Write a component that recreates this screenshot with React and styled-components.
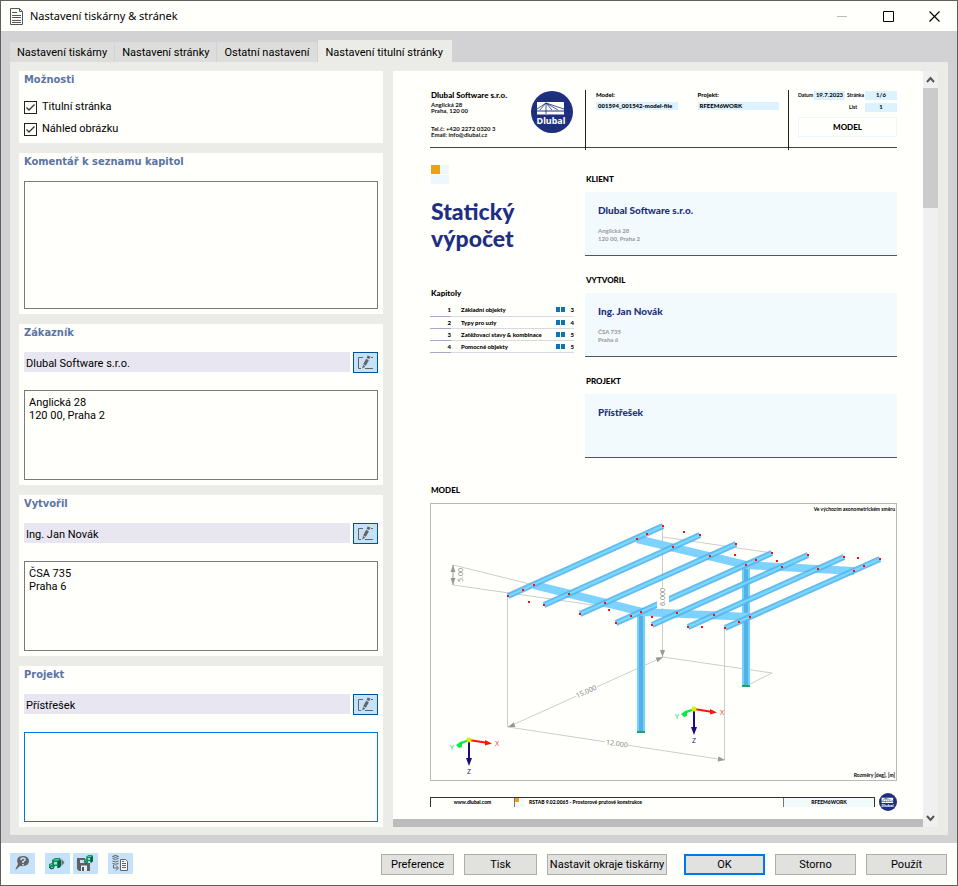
import React from "react";
import styled, { createGlobalStyle } from "styled-components";

const white = "#fffffc";
const ui = 'Roboto, "Noto Sans", sans-serif';
const print = 'Lato, "Open Sans", sans-serif';

const GlobalStyle = createGlobalStyle`
  *, *::before, *::after { box-sizing: border-box; }
  body { margin: 0; background: ${white}; }
  h1, h2, h3, p { margin: 0; }
  button, input, textarea { font: inherit; color: inherit; }
`;

const Window = styled.div`
  display: flex;
  flex-direction: column;
  min-height: 100vh;
  border: 1px solid #5f5f5f;
  background: ${white};
  color: #000;
  font: 11px/16px ${ui};
`;

const TitleBar = styled.header`
  display: flex;
  align-items: center;
  height: 30px;
  padding-left: 9px;
`;

const Title = styled.h1`
  flex: 1;
  margin-left: 7px;
  font-family: "Noto Sans", sans-serif;
  font-size: 11px;
  font-weight: 400;
`;

const Caption = styled.button`
  display: grid;
  place-items: center;
  width: 46px;
  height: 28px;
  padding: 0;
  border: 0;
  background: none;
`;

const Workspace = styled.main`
  display: flex;
  flex: 1;
  flex-direction: column;
  padding: 9px 9px 8px;
  background: #d2d2d5;
`;

const Tabs = styled.div`
  display: flex;
  align-items: flex-end;
  gap: 1px;
`;

const Tab = styled.button`
  height: ${(p) => (p.$active ? 22 : 20)}px;
  padding: ${(p) => (p.$active ? "4px 9px 0 8px" : "2px 7px 0")};
  border: 0;
  background: ${(p) => (p.$active ? "#ebece8" : "#dddddc")};
  white-space: nowrap;
`;

const Panel = styled.div`
  display: grid;
  flex: 1;
  grid-template-columns: 364px minmax(0, 1fr);
  gap: 10px;
  padding: 9px 10px 8px 9px;
  background: #ebece8;
`;

const Settings = styled.div`
  display: flex;
  flex-direction: column;
  gap: 10px;
`;

const Group = styled.section`
  display: flex;
  flex: 1;
  flex-direction: column;
  padding: 0 5px 5px;
  background: ${white};
`;

const OptionsGroup = styled(Group)`
  flex: none;
  padding-bottom: 3px;
`;

const GroupTitle = styled.h2`
  margin-bottom: ${(p) => (p.$compact ? 7 : 10)}px;
  color: #5b74a5;
  font: bold 11px/18px "DejaVu Sans Condensed", "DejaVu Sans", sans-serif;
`;

const CheckRow = styled.label`
  display: flex;
  align-items: center;
  gap: 5px;
  height: 22px;
`;

const Check = styled.input`
  appearance: none;
  width: 13px;
  height: 13px;
  margin: 0;
  border: 1px solid #222;
  background: ${white};
`;

const CheckBox = styled.span`
  display: grid;
  & > * { grid-area: 1 / 1; }
  svg { pointer-events: none; }
  input:not(:checked) + svg { visibility: hidden; }
`;

const FieldRow = styled.div`
  display: flex;
  gap: 3px;
  margin-bottom: 17px;
`;

const Field = styled.input`
  flex: 1;
  min-width: 0;
  height: 20px;
  padding: 2px 2px 0;
  border: 0;
  background: #e8e7f1;
`;

const EditButton = styled.button`
  width: 25px;
  height: 21px;
  padding: 0;
  border: 1px solid #00529b;
  background: #c5e2f8;
  svg { display: block; }
`;

const Area = styled.textarea`
  flex: 1;
  width: 100%;
  min-height: 80px;
  padding: 5px 4px;
  border: 1px solid ${(p) => (p.$focused ? "#0078e0" : "#7a7a7a")};
  outline: 0;
  background: ${white};
  line-height: 13px;
  resize: none;
`;

const Preview = styled.div`
  display: grid;
  grid-template-columns: minmax(0, 1fr) 15px;
`;

const Viewport = styled.div`
  display: flex;
  flex-direction: column;
  background: ${white};
`;

const HorizontalBar = styled.div`
  height: 8px;
  margin-top: auto;
  background: #bcbcbc;
`;

const ScrollBar = styled.div`
  display: flex;
  flex-direction: column;
  background: #f0f0f0;
`;

const ScrollButton = styled.button`
  display: grid;
  place-items: center;
  height: 17px;
  padding: 0;
  border: 0;
  background: none;
`;

const Thumb = styled.div`
  height: 120px;
  margin-bottom: auto;
  background: #cbcbcb;
`;

const Sheet = styled.article`
  padding: 19px 26px 6px 37px;
  font: 6px/6px ${print};
`;

const SheetHeader = styled.header`
  display: grid;
  grid-template-columns: 155px 203px minmax(0, 1fr);
  height: 58px;
  border-bottom: 1px solid #444;
`;

const Company = styled.div`
  display: flex;
  justify-content: space-between;
  padding: 1px 12px 0 1px;
`;

const CompanyName = styled.p`
  margin-bottom: 2px;
  font-size: 8px;
  font-weight: 900;
  line-height: 9px;
`;

const Contact = styled.p`
  margin-bottom: 12px;
  color: #111;
  font-weight: 700;
  white-space: nowrap;
`;

const HeaderFields = styled.div`
  display: grid;
  grid-template-columns: 1fr 1fr;
  gap: 20px;
  padding: 2px 9px 0 10px;
  border-left: 1px solid #222;
  font-weight: 900;
`;

const Value = styled.p`
  margin-top: 4px;
  padding: 1px 2px;
  background: #dcf2fe;
`;

const PageInfo = styled.div`
  display: grid;
  grid-template-columns: 16px 31px 1fr 32px;
  grid-template-rows: 9px 9px 22px;
  align-content: start;
  gap: 3px 0;
  padding: 1px 0 0 9px;
  border-left: 1px solid #222;
  font-size: 5px;
  font-weight: 700;
  line-height: 8px;
`;

const InfoValue = styled.span`
  background: #dcf2fe;
  font-size: 6px;
  text-align: center;
`;

const InfoLabel = styled.span`
  grid-column: ${(p) => p.$column || "auto"};
  padding-right: ${(p) => (p.$column ? 8 : 1)}px;
  text-align: right;
`;

const ModelBox = styled.div`
  grid-column: 1 / -1;
  margin-top: 2px;
  border: 1px solid #edf6fd;
  font-size: 8px;
  font-weight: 900;
  line-height: 19px;
  text-align: center;
`;

const SheetBody = styled.div`
  display: grid;
  grid-template-columns: 145px minmax(0, 1fr);
  column-gap: 10px;
  padding-top: 17px;
`;

const Motif = styled.div`
  display: grid;
  grid-template-columns: repeat(2, ${(p) => (p.$small ? 4 : 9)}px);
  grid-auto-rows: ${(p) => (p.$small ? 4 : 9)}px;
  gap: 1px ${(p) => (p.$small ? 1 : 0)}px;
  margin-left: ${(p) => (p.$small ? 0 : 1)}px;
  span { background: #edf7fe; }
  span:first-child { background: #e8a118; }
`;

const ReportTitle = styled.h2`
  margin: 14px 0 36px 1px;
  color: #1f2f80;
  font-size: 23px;
  font-weight: 900;
  line-height: 27px;
`;

const SmallHeading = styled.h3`
  margin: 0 0 ${(p) => p.$gap || 8}px 1px;
  font-size: 8px;
  font-weight: 900;
  line-height: 10px;
`;

const Chapters = styled.table`
  width: 144px;
  border-collapse: collapse;
  font-weight: 900;
  line-height: 11px;
  td {
    height: 12px;
    padding: 0;
    border-bottom: 1px solid #d9d9e2;
    white-space: nowrap;
  }
  td:first-child { width: 21px; border-color: #a9a6c9; text-align: right; }
  td:nth-child(2) { padding-left: 10px; }
  td:nth-child(3) { width: 10px; }
  td:nth-child(4) { width: 8px; text-align: right; }
  svg { display: block; }
`;

const Parties = styled.div`
  display: flex;
  flex-direction: column;
  gap: 19px;
  padding-top: 9px;
`;

const Card = styled.div`
  height: 64px;
  padding: 12px 13px;
  border-bottom: 1px solid #555;
  background: #f2fafe;
  color: #999;
  font-weight: 700;
  line-height: 8px;
`;

const CardName = styled.p`
  margin-bottom: 11px;
  color: #1f2f80;
  font-size: 10px;
  font-weight: 900;
  line-height: 12px;
`;

const Drawing = styled.section`
  padding-top: 27px;
`;

const Figure = styled.svg`
  display: block;
  width: 100%;
  height: auto;
  border: 1px solid #b9b9b9;
`;

const SheetFooter = styled.footer`
  display: flex;
  gap: 4px;
  align-items: flex-start;
  margin-top: 12px;
`;

const FooterBar = styled.div`
  display: grid;
  flex: 1;
  grid-template-columns: 83px 1fr 91px;
  height: 10px;
  margin-top: 4px;
  border: 1px solid #333;
  border-bottom: 0;
  font-size: 5px;
  font-weight: 900;
  line-height: 9px;
`;

const FooterCell = styled.div`
  display: flex;
  gap: 5px;
  justify-content: ${(p) => (p.$center ? "center" : "flex-start")};
  background: ${(p) => (p.$tint ? "#f2fafe" : "none")};
  border-left: ${(p) => (p.$ruled ? "1px solid #777" : "0")};
`;

const LogoMark = styled.svg`
  flex-shrink: 0;
`;

const ActionBar = styled.footer`
  display: flex;
  align-items: flex-start;
  height: 42px;
  padding: 10px 10px 0 9px;
`;

const Tools = styled.div`
  display: flex;
  flex: 1;
`;

const Tool = styled.button`
  width: 25px;
  height: 21px;
  margin-right: ${(p) => p.$gap}px;
  padding: 0;
  border: 0;
  background: #c5e2f8;
  svg { display: block; }
`;

const Actions = styled.div`
  display: flex;
  gap: 10px;
  padding-top: 1px;
`;

const Action = styled.button`
  width: ${(p) => p.$width}px;
  height: 21px;
  margin-left: ${(p) => (p.$primary ? 7 : 0)}px;
  padding: 0;
  border: ${(p) => (p.$primary ? "2px solid #0078e7" : "1px solid #adadad")};
  background: #e1e1e0;
  line-height: 16px;
  white-space: nowrap;
`;

function Logo({ size }) {
  return (
    <LogoMark width={size} height={size} viewBox="0 0 42 42">
      <circle cx="21" cy="21" r="21" fill="#1f2f80" />
      <path fill={white} d="M6 11h27v8.500H6zM6 20.500h27v3H6z" />
      <path fill="none" stroke="#1f2f80" d="M6 18L15 12L33 18M15 12v11M15 12L9 19M15 12L21 19M15 12L27 19" strokeWidth=".8" />
      <text x="20" y="33" fill={white} fontFamily="Noto Sans" fontWeight="700" fontSize="9" textAnchor="middle">Dlubal</text>
    </LogoMark>
  );
}

const pencil = (
  <svg width="23" height="19" viewBox="0 0 23 19" fill="none" stroke="#646464">
    <path d="M9 4.500H4.500v11H7M11 15.500h8M17 4.500h2" />
    <path d="M15 3L14 5.500" strokeWidth="3" />
    <path d="M13.500 6.500L10.500 12" strokeWidth="3" />
    <path d="M9.500 12L8.500 15L11 13.500" fill="#646464" strokeWidth=".5" />
  </svg>
);

const green = (
  <g>
    <path d="M3 2L6 0H11L12 2V8L10 10H8V8H6L5 10L2 11L0 9V6L3 5z" fill="#128a5f" />
    <path d="M4 2.500L6.500 1H10.500L9 2.500z" fill="#4fcb9c" />
    <path d="M9 3L12 2V8L10 10H9z" fill="#086142" />
    <path d="M5 4H8V6.500H5z" fill="#a6e4cc" />
    <path d="M1 7L3 6.500M2 9.500H4" stroke="#5bd0a5" fill="none" />
    <path d="M5 10L2 11L0 9" stroke="#07583d" fill="none" />
  </g>
);

const tools = [
  {
    name: "Nápověda", gap: 10,
    icon: <g><path d="M6 15L8 11Q5 3 13 3Q19 3 19 8.500Q18 14 10 13L5.500 17z" fill="#646464" /><path d="M11 7Q11 5 13 5Q15.500 5 15 7Q14.500 8 13 8.500V10M13 11v1.500" fill="none" stroke="#c5e2f8" strokeWidth="1.600" /></g>,
  },
  {
    name: "Načíst nastavení", gap: 3,
    icon: <g><g transform="translate(4 5)">{green}</g><path d="M16.500 6L19.500 9.500L16.500 13z" fill="#6d6d6d" /></g>,
  },
  {
    name: "Uložit nastavení", gap: 10,
    icon: <g><path d="M4 5h8v2H7v3h10v8H6L4 16z" fill="#606060" /><path d="M8 12.500h6V18H8z" fill="#dceefa" /><path d="M9 14h2v4H9z" fill="#555" /><g transform="translate(11 2) scale(.75)">{green}</g></g>,
  },
  {
    name: "Kopírovat data", gap: 0,
    icon: <g fill="none" stroke="#646464"><path d="M4.500 3.500Q7.500 1 10.500 3.500Q7.500 5.500 4.500 3.500M4.500 5.500Q7.500 7.500 10.500 5.500M4.500 8Q7.500 10 10.500 8M4.500 10.500Q7.500 12 10.500 10.500M5.500 12v3h4M8 12.500L10.500 15L8 17.500" /><path d="M12.500 6.500h5l2 2v9h-7z" fill="#f3f8fb" /><path d="M14 8.500h2M14 10.500h4M14 12.500h4M14 14.500h4" /></g>,
  },
];

const purlins = [
  [508, 596, 663, 526], [544, 605, 700, 535], [580, 614, 736, 544], [616, 623, 772, 553],
  [652, 625, 808, 555], [688, 627, 844, 557], [725, 628, 880, 559],
];
const joists = ["M637 539L746 565L854 571", "M534 585L642 612L750 617"];
const extraNodes = [
  [637, 539], [673, 547], [710, 556], [746, 565], [782, 567], [818, 569], [854, 571],
  [534, 585], [569, 594], [605, 603], [641, 612], [677, 613], [714, 615], [750, 617],
  [523, 590], [529, 602], [647, 534], [609, 610], [631, 616], [652, 617], [684, 532], [735, 555],
  [756, 560], [777, 561], [858, 558], [864, 566], [702, 627], [739, 622],
];

function Axes({ x, y }) {
  return (
    <g transform={`translate(${x} ${y})`} fontFamily="Noto Sans" fontSize="7" textAnchor="middle">
      <path d="M0 0L19 3" stroke="#ff1508" strokeWidth="2" />
      <path d="M16 0L23 3.500L16 5.500z" fill="#ff1508" />
      <path d="M0 0L-10 4" stroke="#00ee3c" strokeWidth="2" />
      <path d="M-7 1L-13 5L-10 8L-7 7z" fill="#00ee3c" />
      <path d="M0 0V21" stroke="#1b0c7c" strokeWidth="2" />
      <path d="M-3 18H3L0 26z" fill="#1b0c7c" />
      <circle r="2.500" fill="#d7ee00" />
      <text x="28" y="6" fill="#f0402a">X</text>
      <text x="-17" y="10" fill="#12c98b">Y</text>
      <text x="0" y="34" fill="#2a1d86">Z</text>
    </g>
  );
}

function Arrow({ x, y, angle }) {
  return <path d="M0 0L-7 -2.500V2.500z" fill="#999" transform={`translate(${x} ${y}) rotate(${angle})`} />;
}

function Model() {
  const nodes = purlins.flatMap(([a, b, c, d]) => [[a, b], [c, d]]).concat(extraNodes);
  return (
    <Figure viewBox="431 504 465 276" role="img" aria-label="Model přístřešku">
      <g fill="none" stroke="#cccccc">
        <path d="M507.500 596V727M662.500 526V657M724.500 629V760M663 537L772 553M453 565L534 585M453 585L642 612" />
        <path d="M508 727L663 657M508 727L725 760M663 657L772 673L746 686" />
        <path d="M453 565V585" stroke="#999" />
      </g>
      <Arrow x={453} y={565} angle={-90} />
      <Arrow x={453} y={585} angle={90} />
      <Arrow x={662.5} y={657} angle={90} />
      <Arrow x={663} y={657} angle={-24} />
      <Arrow x={508} y={727} angle={160} />
      <Arrow x={725} y={760} angle={8} />
      <g fill="none">
        <path d="M641 612V732M746 565V686" stroke="#70d2ff" strokeWidth="8" />
        <path d="M641 612V732M746 565V686" stroke="#55b0e6" strokeWidth="4" />
        {joists.map((d) => <path key={d} d={d} stroke="#7dd3fe" strokeWidth="8" />)}
        {purlins.map(([a, b, c, d]) => (
          <g key={a}>
            <path d={`M${a} ${b}L${c} ${d}`} stroke="#58b4ee" strokeWidth="6" opacity=".9" />
            <path d={`M${a} ${b}L${c} ${d}`} stroke="#76dcfc" strokeWidth="2" />
          </g>
        ))}
      </g>
      <path d="M657 587h12v21h-12z" fill={white} />
      <path d="M637 732h8M742 686h8" stroke="#1ba468" strokeWidth="2" />
      {nodes.map(([x, y]) => <rect key={`${x} ${y}`} x={x - 1} y={y - 1} width="2" height="2" fill="#ff0d0d" />)}
      <g fontFamily="Noto Sans" fontSize="7" fill="#888" textAnchor="middle">
        <path d="M575 688h23v6h-23z" fill={white} transform="rotate(-24 586 691)" />
        <path d="M605 740h23v6h-23z" fill={white} transform="rotate(8 617 743)" />
        <text x="586" y="694" transform="rotate(-24 586 691)">15.000</text>
        <text x="617" y="746" transform="rotate(8 617 743)">12.000</text>
        <text transform="translate(463 575) rotate(-90)">5.00</text>
        <text transform="translate(665 597) rotate(-90)">6.000</text>
      </g>
      <Axes x={469} y={740} />
      <Axes x={694} y={709} />
      <g fontFamily="Lato" fontSize="5" fontWeight="700" textAnchor="end">
        <text x="895" y="511">Ve výchozím axonometrickém směru</text>
        <text x="895" y="777">Rozměry [deg], [m]</text>
      </g>
    </Figure>
  );
}

function Option({ children }) {
  return (
    <CheckRow>
      <CheckBox>
        <Check type="checkbox" defaultChecked />
        <svg width="13" height="13" viewBox="0 0 13 13"><path d="M2.500 6.500L5 9L10.500 3.500" fill="none" stroke="#333" strokeWidth="1.300" /></svg>
      </CheckBox>
      {children}
    </CheckRow>
  );
}

function Party({ title, name, address, focused }) {
  return (
    <Group>
      <GroupTitle>{title}</GroupTitle>
      <FieldRow>
        <Field aria-label={title} defaultValue={name} />
        <EditButton aria-label={`Upravit: ${title}`}>{pencil}</EditButton>
      </FieldRow>
      <Area aria-label={`${title} – adresa`} defaultValue={address} $focused={focused} />
    </Group>
  );
}

const chapters = ["Základní objekty", "Typy pro uzly", "Zatěžovací stavy & kombinace", "Pomocné objekty"];
const chapterPages = [3, 4, 5, 5];
const cards = [
  ["KLIENT", "Dlubal Software s.r.o.", ["Anglická 28", "120 00, Praha 2"]],
  ["VYTVOŘIL", "Ing. Jan Novák", ["ČSA 735", "Praha 6"]],
  ["PROJEKT", "Přístřešek", []],
];

function ReportSheet() {
  return (
    <Sheet>
      <SheetHeader>
        <Company>
          <div>
            <CompanyName>Dlubal Software s.r.o.</CompanyName>
            <Contact>Anglická 28<br />Praha, 120 00</Contact>
            <Contact>Tel.č: +420 2272 0320 3<br />Email: info@dlubal.cz</Contact>
          </div>
          <Logo size={42} />
        </Company>
        <HeaderFields>
          <div>Model:<Value>001594_001542-model-file</Value></div>
          <div>Projekt:<Value>RFEEM6WORK</Value></div>
        </HeaderFields>
        <PageInfo>
          <InfoLabel>Datum</InfoLabel><InfoValue>19.7.2023</InfoValue>
          <InfoLabel>Stránka</InfoLabel><InfoValue>1/6</InfoValue>
          <InfoLabel $column="1 / 4">List</InfoLabel><InfoValue>1</InfoValue>
          <ModelBox>MODEL</ModelBox>
        </PageInfo>
      </SheetHeader>
      <SheetBody>
        <div>
          <Motif><span /><span /><span /><span /></Motif>
          <ReportTitle>Statický<br />výpočet</ReportTitle>
          <SmallHeading $gap={6}>Kapitoly</SmallHeading>
          <Chapters>
            <tbody>
              {chapters.map((name, i) => (
                <tr key={name}>
                  <td>{i + 1}</td><td>{name}</td>
                  <td><svg width="9" height="5" viewBox="0 0 9 5"><path d="M0 0h4v5H0zM5 0h4v5H5z" fill="#0d74b8" /></svg></td>
                  <td>{chapterPages[i]}</td>
                </tr>
              ))}
            </tbody>
          </Chapters>
        </div>
        <Parties>
          {cards.map(([label, name, lines]) => (
            <section key={label}>
              <SmallHeading>{label}</SmallHeading>
              <Card>
                <CardName>{name}</CardName>
                {lines.map((line) => <p key={line}>{line}</p>)}
              </Card>
            </section>
          ))}
        </Parties>
      </SheetBody>
      <Drawing>
        <SmallHeading>MODEL</SmallHeading>
        <Model />
      </Drawing>
      <SheetFooter>
        <FooterBar>
          <FooterCell $center>www.dlubal.com</FooterCell>
          <FooterCell $ruled>
            <Motif $small><span /><span /><span /><span /></Motif>
            <span>RSTAB 9.02.0065 - Prostorové prutové konstrukce</span>
          </FooterCell>
          <FooterCell $center $tint $ruled>RFEEM6WORK</FooterCell>
        </FooterBar>
        <Logo size={18} />
      </SheetFooter>
    </Sheet>
  );
}

function Chevron({ down }) {
  return (
    <svg width="9" height="7" viewBox="0 0 9 7">
      <path d={down ? "M1 1L4.500 5L8 1" : "M1 6L4.500 2L8 6"} fill="none" stroke="#555" strokeWidth="2" />
    </svg>
  );
}

export default function App() {
  return (
    <Window>
      <GlobalStyle />
      <TitleBar>
        <svg width="13" height="17" viewBox="0 0 13 17" fill="none" stroke="#555">
          <path d="M.5 .5h9l3 3v13H.5zM9.500 .5v3h3M2 4.500h5M2 7.500h9M2 9.500h9M2 12.500h9M2 14.500h9" />
        </svg>
        <Title>Nastavení tiskárny &amp; stránek</Title>
        <Caption aria-label="Minimalizovat"><svg width="11" height="11"><path d="M0 5.500h10" stroke="#bbb" /></svg></Caption>
        <Caption aria-label="Maximalizovat"><svg width="11" height="11"><path d="M.5 .5h10v10H.5z" fill="none" stroke="#000" /></svg></Caption>
        <Caption aria-label="Zavřít"><svg width="11" height="11"><path d="M.5 .5l10 10M10.500 .5l-10 10" stroke="#000" strokeWidth="1.200" /></svg></Caption>
      </TitleBar>
      <Workspace>
        <Tabs role="tablist">
          <Tab role="tab">Nastavení tiskárny</Tab>
          <Tab role="tab">Nastavení stránky</Tab>
          <Tab role="tab">Ostatní nastavení</Tab>
          <Tab role="tab" aria-selected="true" $active>Nastavení titulní stránky</Tab>
        </Tabs>
        <Panel>
          <Settings>
            <OptionsGroup>
              <GroupTitle $compact>Možnosti</GroupTitle>
              <Option>Titulní stránka</Option>
              <Option>Náhled obrázku</Option>
            </OptionsGroup>
            <Group>
              <GroupTitle>Komentář k seznamu kapitol</GroupTitle>
              <Area aria-label="Komentář k seznamu kapitol" />
            </Group>
            <Party title="Zákazník" name="Dlubal Software s.r.o." address={"Anglická 28\n120 00, Praha 2"} />
            <Party title="Vytvořil" name="Ing. Jan Novák" address={"ČSA 735\nPraha 6"} />
            <Party title="Projekt" name="Přístřešek" address="" focused />
          </Settings>
          <Preview>
            <Viewport>
              <ReportSheet />
              <HorizontalBar />
            </Viewport>
            <ScrollBar>
              <ScrollButton aria-label="Nahoru"><Chevron /></ScrollButton>
              <Thumb />
              <ScrollButton aria-label="Dolů"><Chevron down /></ScrollButton>
            </ScrollBar>
          </Preview>
        </Panel>
      </Workspace>
      <ActionBar>
        <Tools>
          {tools.map((tool) => (
            <Tool key={tool.name} aria-label={tool.name} $gap={tool.gap}>
              <svg width="25" height="21" viewBox="0 0 25 21">{tool.icon}</svg>
            </Tool>
          ))}
        </Tools>
        <Actions>
          <Action $width={73}>Preference</Action>
          <Action $width={73}>Tisk</Action>
          <Action $width={120}>Nastavit okraje tiskárny</Action>
          <Action $width={81} $primary>OK</Action>
          <Action $width={81}>Storno</Action>
          <Action $width={81}>Použít</Action>
        </Actions>
      </ActionBar>
    </Window>
  );
}
